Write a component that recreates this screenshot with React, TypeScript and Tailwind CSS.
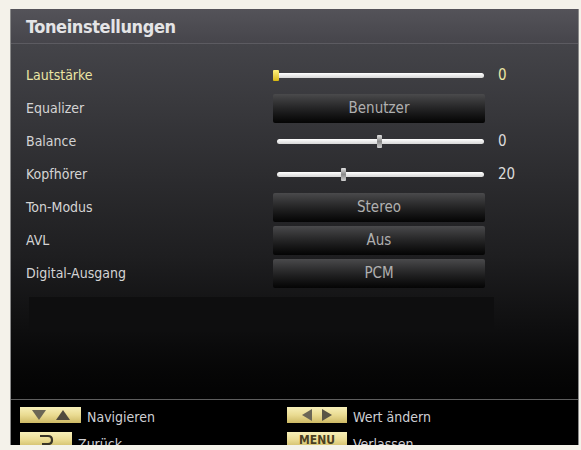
import { ReactNode } from "react";

type Row =
  | { id: string; label: string; kind: "slider"; value: number; pos: number; active?: boolean }
  | { id: string; label: string; kind: "option"; text: string };

const rows: Row[] = [
  { id: "vol", label: "Lautstärke", kind: "slider", value: 0, pos: 0, active: true },
  { id: "eq", label: "Equalizer", kind: "option", text: "Benutzer" },
  { id: "bal", label: "Balance", kind: "slider", value: 0, pos: 0.5 },
  { id: "hp", label: "Kopfhörer", kind: "slider", value: 20, pos: 0.32 },
  { id: "mode", label: "Ton-Modus", kind: "option", text: "Stereo" },
  { id: "avl", label: "AVL", kind: "option", text: "Aus" },
  { id: "dig", label: "Digital-Ausgang", kind: "option", text: "PCM" },
];

function Slider({ pos, active }: { pos: number; active?: boolean }) {
  return (
    <div className="relative h-[11px] w-[212px] flex items-center">
      <div className="ml-[4px] h-[5px] w-[207px] rounded-full bg-gradient-to-b from-white to-[#d6d6d6]" />
      {active ? (
        <div className="absolute left-0 top-0 h-[11px] w-[6px] rounded-[1px] bg-gradient-to-b from-[#fff27a] to-[#d9b800]" />
      ) : (
        <div
          className="absolute top-[-1px] h-[13px] w-[5px] rounded-[1px] bg-gradient-to-b from-[#e0e0e0] via-[#8a8a8a] to-[#d0d0d0]"
          style={{ left: `${4 + pos * 200}px` }}
        />
      )}
    </div>
  );
}

function OptionBox({ text }: { text: string }) {
  return (
    <div className="h-[29px] w-[212px] rounded-[2px] bg-gradient-to-b from-[#4a4a4c] via-[#242425] to-[#050505] flex items-center justify-center text-[15px] text-[#b0b0b0]">
      {text}
    </div>
  );
}

function KeyBox({ children, w }: { children: ReactNode; w: string }) {
  return (
    <div
      className={`${w} h-[16px] shrink-0 bg-gradient-to-b from-[#f7efb8] via-[#eadb92] to-[#cdb964] flex items-center justify-center gap-[10px]`}
    >
      {children}
    </div>
  );
}

export default function App() {
  return (
    <div
      className="w-[581px] h-[450px] bg-[#f4f2ea] pl-[10px] pt-[9px] overflow-hidden"
      style={{ fontFamily: '"DejaVu Sans Condensed", "DejaVu Sans", sans-serif' }}
    >
      <div className="w-[569px] h-[436px] overflow-hidden border-l border-r border-[#8a8a8a] bg-black flex flex-col">
        {/* header */}
        <div className="h-[35px] shrink-0 bg-gradient-to-b from-[#545359] to-[#46454b] border-b border-[#5c5b61] pl-[15px] flex items-center">
          <span className="text-[18px] font-bold text-[#e4e4e6] tracking-[-0.4px]">Toneinstellungen</span>
        </div>

        {/* body */}
        <div className="h-[355px] shrink-0 bg-gradient-to-b from-[#444449] via-[#1e1e20] via-60% to-[#030303] pt-[15px] flex flex-col">
          {rows.map((r) => (
            <div key={r.id} className="h-[33px] flex items-center pl-[15px]">
              <span
                className={`w-[247px] text-[14px] ${r.id === "vol" ? "text-[#ece6a4]" : "text-[#d4d4d4]"}`}
              >
                {r.label}
              </span>
              {r.kind === "slider" ? (
                <>
                  <Slider pos={r.pos} active={r.active} />
                  <span className={`ml-[13px] text-[15px] ${r.active ? "text-[#ece6a4]" : "text-[#dcdcdc]"}`}>
                    {r.value}
                  </span>
                </>
              ) : (
                <OptionBox text={r.text} />
              )}
            </div>
          ))}
          <div className="mt-[7px] ml-[18px] h-[34px] w-[465px] bg-[#0e0e0f]" />
        </div>

        {/* footer */}
        <div className="border-t border-[#5e5e5e] pt-[7px] pl-[9px] grid grid-cols-[267px_1fr] gap-y-[7px] text-[14px] leading-[16px] text-[#cfcfd4]">
          <div className="flex items-start gap-[6px]">
            <KeyBox w="w-[61px]">
              <svg width="14" height="10" viewBox="0 0 14 10"><path d="M0 0H14L7 10Z" fill="#6b6656" /></svg>
              <svg width="14" height="10" viewBox="0 0 14 10"><path d="M0 10H14L7 0Z" fill="#4f4a3e" /></svg>
            </KeyBox>
            <span className="mt-[2px]">Navigieren</span>
          </div>
          <div className="flex items-start gap-[6px]">
            <KeyBox w="w-[60px]">
              <svg width="10" height="12" viewBox="0 0 10 12"><path d="M10 0V12L0 6Z" fill="#6b6656" /></svg>
              <svg width="10" height="12" viewBox="0 0 10 12"><path d="M0 0V12L10 6Z" fill="#5a5546" /></svg>
            </KeyBox>
            <span className="mt-[2px]">Wert ändern</span>
          </div>
          <div className="flex items-start gap-[6px]">
            <KeyBox w="w-[52px]">
              <svg width="16" height="12" viewBox="0 0 16 12">
                <path d="M2 2H10Q14 2 14 6Q14 10 10 10H4" fill="none" stroke="#3a3527" strokeWidth="2.2" />
              </svg>
            </KeyBox>
            <span className="mt-[4px]">Zurück</span>
          </div>
          <div className="flex items-start gap-[6px]">
            <KeyBox w="w-[60px]">
              <span className="text-[12px] font-bold text-[#4a3f22] leading-none">MENU</span>
            </KeyBox>
            <span className="mt-[4px]">Verlassen</span>
          </div>
        </div>
      </div>
    </div>
  );
}
